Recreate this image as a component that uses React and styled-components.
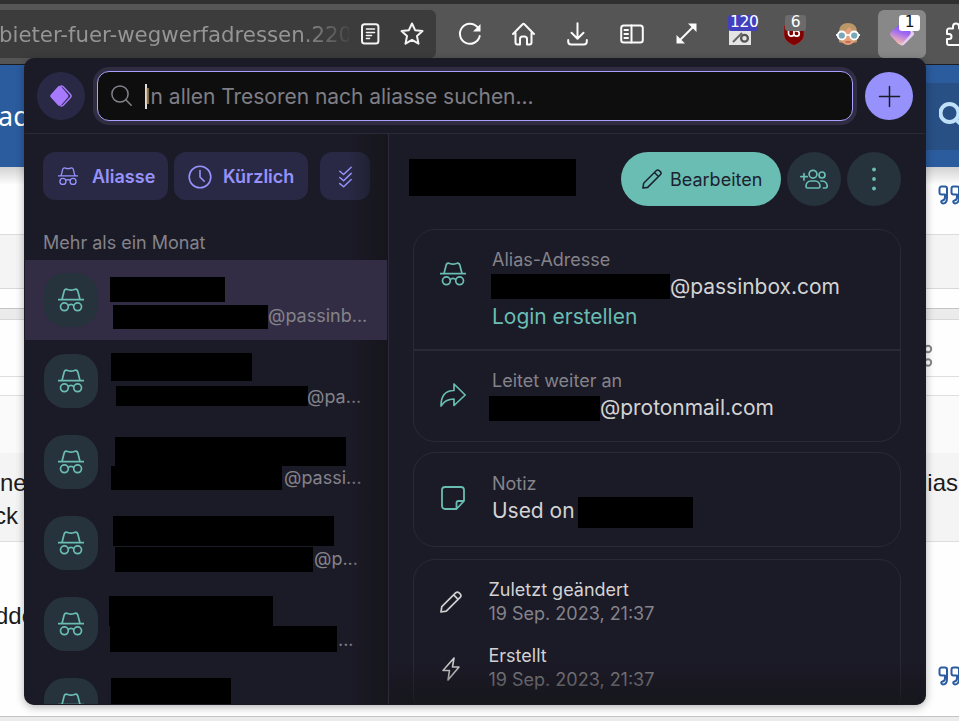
import React from 'react';
import styled, { createGlobalStyle } from 'styled-components';

const Global = createGlobalStyle`
  * { box-sizing: border-box; }
  html, body { margin: 0; padding: 0; overflow: hidden; }
  body { font-family: Inter, "Liberation Sans", sans-serif; }
  svg { display: block; flex: none; }
`;

const Screen = styled.div`
  position: relative;
  width: 959px;
  height: 721px;
  overflow: hidden;
  display: flex;
  flex-direction: column;
  background: #fefefe;
`;

/* Browser toolbar */
const Toolbar = styled.div`
  height: 65px;
  flex: none;
  display: flex;
  align-items: flex-start;
  padding-top: 6px;
  border-top: 4px solid #303030;
  border-bottom: 1px solid #1d1d1f;
  background: #555555;
`;
const UrlBar = styled.div`
  width: 436px;
  height: 48px;
  flex: none;
  margin-right: 7px;
  display: flex;
  align-items: center;
  background: #3c3c3c;
  border-radius: 0 6px 6px 0;
`;
const Url = styled.div`
  width: 349px;
  margin-right: 12px;
  padding-top: 2px;
  white-space: nowrap;
  font: 21.33px/30px "DejaVu Sans", sans-serif;
  letter-spacing: -0.02px;
  text-indent: -1px;
  color: #959595;
  mask-image: linear-gradient(90deg, #000 300px, transparent 355px);
`;
const Star = styled.div`
  margin-left: 20px;
`;
const ToolSlot = styled.div`
  position: relative;
  width: ${(p) => (p.$active ? 48 : 54)}px;
  margin: 0 ${(p) => (p.$active ? 3 : 0)}px;
  height: 48px;
  flex: none;
  display: flex;
  align-items: center;
  justify-content: center;
  border-radius: 6px;
  background: ${(p) => (p.$active ? '#888888' : 'transparent')};
`;
const Badge = styled.span`
  position: absolute;
  top: 5px;
  left: ${(p) => p.$left}px;
  width: ${(p) => p.$width}px;
  height: 16px;
  border-radius: 3px;
  text-align: center;
  padding-left: ${(p) => p.$pad || 0}px;
  font: 15.5px/14px "DejaVu Sans", sans-serif;
  letter-spacing: -0.4px;
  color: ${(p) => p.$color || '#ffffff'};
  background: ${(p) => p.$bg};
`;

/* Web page behind the popup */
const Band = styled.div`
  height: ${(p) => p.$h}px;
  flex: none;
  display: flex;
  justify-content: space-between;
  overflow: hidden;
  background: ${(p) => p.$bg || '#fefefe'};
  border-bottom: ${(p) => (p.$line ? `1px solid ${p.$line}` : 'none')};
`;
const BandLeft = styled.div`
  width: 26px;
  padding-top: ${(p) => p.$top || 0}px;
  text-indent: ${(p) => p.$indent || 0}px;
  white-space: nowrap;
  font: ${(p) => (p.$title ? '27px/32px "Noto Sans"' : '24px/33px "Liberation Sans"')}, sans-serif;
  color: ${(p) => (p.$title ? '#ffffff' : '#1b1b1b')};
`;
const BandRight = styled(BandLeft)`
  width: ${(p) => p.$w || 36}px;
`;
const PageLine = styled.div`
  text-indent: ${(p) => p.$indent}px;
`;
const SearchPatch = styled.div`
  width: 35px;
  height: 67px;
  margin-top: 18px;
  padding: 19px 0 0 15px;
  background: #285085;
`;
const HeaderShade = styled(Band)`
  background: linear-gradient(#d2d2d2, #fefefe 18px);
`;

/* Popup */
const Popup = styled.div`
  position: absolute;
  left: 24px;
  top: 58px;
  width: 902px;
  height: 647px;
  overflow: hidden;
  border: 1px solid #1d1b26;
  border-top-width: 0;
  border-radius: 10px;
  background: #1b1a27;
  box-shadow: 0 2px 8px rgba(0, 0, 0, 0.3);
  display: flex;
  flex-direction: column;
`;
const PopupHeader = styled.div`
  height: 76px;
  flex: none;
  display: flex;
  align-items: center;
  padding: 0 12px 0 12px;
  border-bottom: 1px solid #2a2936;
`;
const RoundButton = styled.div`
  width: ${(p) => p.$size}px;
  height: ${(p) => p.$size}px;
  flex: none;
  display: flex;
  align-items: center;
  justify-content: center;
  border-radius: 50%;
  background: ${(p) => p.$bg};
`;
const SearchField = styled.div`
  width: 756px;
  height: 50px;
  margin: 0 12px;
  display: flex;
  align-items: center;
  padding-left: 13px;
  border: 1px solid #a8a0ff;
  border-radius: 12px;
  background: #0e0e0e;
  box-shadow: 0 0 0 4px #302c42;
`;
const Caret = styled.div`
  width: 2px;
  height: 25px;
  margin: 1px -2px 0 13px;
  background: #dddddd;
`;
const Placeholder = styled.div`
  padding-top: 2px;
  font-size: 21px;
  line-height: 30px;
  letter-spacing: -0.03px;
  color: #7f7e86;
`;
const Columns = styled.div`
  flex: 1;
  min-height: 0;
  display: flex;
`;
const ListPane = styled.div`
  position: relative;
  width: 364px;
  flex: none;
  overflow: hidden;
  border-right: 1px solid #2c2a38;
`;
const PaneShade = styled.div`
  position: absolute;
  top: 0;
  right: 0;
  bottom: 0;
  width: 40px;
  pointer-events: none;
  background: linear-gradient(90deg, rgba(20, 19, 25, 0), rgba(20, 20, 22, 0.7));
`;
const BottomShade = styled.div`
  position: absolute;
  left: 364px;
  right: 0;
  bottom: 0;
  height: 44px;
  pointer-events: none;
  background: linear-gradient(rgba(20, 19, 25, 0), rgba(20, 20, 22, 0.6));
`;
const Filters = styled.div`
  display: flex;
  padding: 18px 0 0 18px;
`;
const Filter = styled.div`
  width: ${(p) => p.$w}px;
  height: 48px;
  margin-right: ${(p) => p.$gap || 0}px;
  padding: 1px 0 0 ${(p) => p.$pad}px;
  display: flex;
  align-items: center;
  gap: ${(p) => p.$space || 11}px;
  border-radius: 12px;
  background: #292946;
  color: #9792fb;
  font-size: 18px;
  font-weight: 600;
`;
const GroupLabel = styled.div`
  height: 60px;
  padding: 31px 0 0 18px;
  font-size: 18px;
  line-height: 24px;
  color: #84838a;
`;
const AliasRow = styled.div`
  position: relative;
  z-index: ${(p) => (p.$selected ? 1 : 'auto')};
  height: ${(p) => (p.$selected ? 80 : 81)}px;
  margin-right: ${(p) => (p.$selected ? 1 : 0)}px;
  padding: ${(p) => (p.$selected ? 13 : 14)}px 0 0 19px;
  display: flex;
  background: ${(p) => (p.$selected ? '#322d44' : 'transparent')};
`;
const AliasTile = styled.div`
  width: 54px;
  height: 54px;
  flex: none;
  display: flex;
  align-items: center;
  justify-content: center;
  border-radius: 21px;
  background: #26323c;
  color: #6abdb2;
`;
const AliasText = styled.div`
  padding-left: 11px;
  margin-top: ${(p) => p.$top}px;
`;
const AliasLine = styled.div`
  height: ${(p) => p.$h}px;
  margin-left: ${(p) => p.$x}px;
  margin-bottom: ${(p) => p.$gap || 0}px;
  display: flex;
  align-items: flex-start;
`;
const Redacted = styled.div`
  width: ${(p) => p.$w}px;
  height: ${(p) => p.$h}px;
  flex: none;
  background: #000000;
`;
const Domain = styled.div`
  margin-left: ${(p) => p.$dx || 0}px;
  margin-top: ${(p) => p.$dy || 0}px;
  font-size: 18px;
  line-height: 22px;
  color: #84838a;
`;

const DetailPane = styled.div`
  flex: 1;
  min-width: 0;
  padding: 18px 24px 0 20px;
  overflow: hidden;
`;
const DetailHead = styled.div`
  display: flex;
  height: 77px;
`;
const TitleSlot = styled.div`
  width: 212px;
  padding-top: 7px;
`;
const EditButton = styled.div`
  width: 160px;
  height: 54px;
  padding-left: 21px;
  display: flex;
  align-items: center;
  gap: 8px;
  border-radius: 27px;
  background: #6abdb2;
  color: #1b2230;
  font-size: 18px;
`;
const HeadAction = styled(RoundButton)`
  margin-left: 6px;
  color: #6abdb2;
`;
const Card = styled.div`
  width: 488px;
  height: ${(p) => p.$h}px;
  margin: 0 0 ${(p) => p.$gap || 0}px 4px;
  border: 1px solid #2a2936;
  border-radius: 22px;
`;
const Field = styled.div`
  height: ${(p) => p.$h}px;
  display: flex;
  padding: ${(p) => p.$top}px 0 0 26px;
  border-bottom: ${(p) => (p.$divided ? '2px solid #2a2936' : 'none')};
`;
const FieldIcon = styled.div`
  width: ${(p) => p.$w || 52}px;
  padding-top: ${(p) => p.$top}px;
  color: ${(p) => (p.$plain ? '#cfcfd0' : '#6abdb2')};
`;
const FieldLabel = styled.div`
  font-size: 18px;
  line-height: 24px;
  color: ${(p) => (p.$bright ? '#d3d3d4' : '#84838a')};
`;
const FieldValue = styled.div`
  display: flex;
  height: 30px;
  margin-left: ${(p) => p.$x || 0}px;
  align-items: center;
  white-space: nowrap;
  font-size: 21px;
  line-height: 30px;
  letter-spacing: -0.03px;
  gap: ${(p) => p.$gap || 0}px;
  color: ${(p) => (p.$link ? '#6abdb2' : '#d3d3d4')};
`;
const NoteRedaction = styled(Redacted)`
  margin-top: 3px;
`;
const RaisedRedaction = styled(Redacted)`
  margin-top: -2px;
`;

const line = (w = 2) => ({
  fill: 'none', stroke: 'currentColor', strokeWidth: w, strokeLinecap: 'round', strokeLinejoin: 'round',
});

const AliasIcon = ({ w = 26, sw = 1.7 }) => (
  <svg width={w} height={(w * 24) / 26} viewBox="0 0 26 24" {...line(sw)} strokeLinecap="butt">
    <path d="M0 11.6h26M4 11.5 6.1 3.2C6.7 1.2 8 .9 9.6 1.5c2.4.9 4.4.9 6.8 0 1.6-.6 2.9-.3 3.5 1.700L22 11.500" />
    <circle cx="6.400" cy="18.800" r="3.900" /><circle cx="19.600" cy="18.800" r="3.900" />
    <path d="M10.200 17.800c1.200-1.900 4.400-1.900 5.600 0" />
  </svg>
);
const PencilIcon = ({ w = 22 }) => (
  <svg width={w} height={w} viewBox="0 0 22 22" {...line(1.7)}>
    <path d="M1 21 1.800 15.700 15.600 1.900a2.500 2.500 0 0 1 3.500 0l1 1a2.500 2.500 0 0 1 0 3.500L6.300 20.200ZM13.700 3.900l4.400 4.400" />
  </svg>
);
const QuoteIcon = () => (
  <svg width="26" height="20" viewBox="0 0 26 20" {...line(2)} color="#2b5ca0">
    <path d="M8 9.500H4.500a2 2 0 0 1-2-2v-4a2 2 0 0 1 2-2H8a2 2 0 0 1 2 2v9c0 3.500-1.500 6-4 6-2 0-2.500-2.500-.5-3C7.500 15 8 14 8 12ZM20 9.500h-3.500a2 2 0 0 1-2-2v-4a2 2 0 0 1 2-2H20a2 2 0 0 1 2 2v9c0 3.500-1.500 6-4 6-2 0-2.500-2.500-.5-3 2-.5 2.500-1.500 2.500-3.500Z" />
  </svg>
);

const ROWS = [
  { top: 4, a: [-1, 25, 115], gap: 3, b: [2, 24, 155], text: '@passinb...', dx: 0 },
  { top: -1, a: [0, 28, 141], gap: 5, b: [5, 20, 192], text: '@pa...', dx: -1 },
  { top: 2, a: [4, 29, 231], gap: 0, b: [0, 24, 171], text: '@passi...', dx: 2, dy: 1 },
  { top: 0, a: [2, 30, 221], gap: 1, b: [4, 25, 198], text: '@p...', dx: 1, dy: 1 },
  { top: -1, a: [-2, 30, 164], gap: 0, b: [-1, 26, 227], text: '...', dx: 1, dy: 3 },
  { top: 0, a: [0, 28, 120] },
];

const BrowserIcons = () => (
  <>
    <ToolSlot><svg width="24" height="24" viewBox="0 0 24 24" {...line(2)} color="#fbfbfb"><path d="M21.700 14A10 10 0 1 1 19.500 5.200" /><path d="M22.500 2v7.500H15Z" fill="currentColor" stroke="none" /></svg></ToolSlot>
    <ToolSlot><svg width="24" height="24" viewBox="0 0 24 24" {...line(2)} color="#fbfbfb"><path d="M1 12 10.600 2.200a1.200 1.200 0 0 1 1.800 0L22 12M3.500 11v9.500a2 2 0 0 0 2 2H8V17a2.500 2.500 0 0 1 2.500-2.500h2A2.500 2.500 0 0 1 15 17v5.500h2.500a2 2 0 0 0 2-2V11" /></svg></ToolSlot>
    <ToolSlot><svg width="22" height="24" viewBox="0 0 22 24" {...line(2)} color="#fbfbfb"><path d="M10.500 1.300v15M4.500 10.800l6 6 6-6M1.200 18v1.500a3 3 0 0 0 3 3h12.600a3 3 0 0 0 3-3V18" /></svg></ToolSlot>
    <ToolSlot><svg width="24" height="20" viewBox="0 0 24 20" {...line(2)} color="#fbfbfb"><rect x="1.200" y="1.500" width="21.600" height="17" rx="2.500" /><path d="M11.500 1.500v17M4.500 6h3.500M4.500 10h3.500M4.500 14h3.500" /></svg></ToolSlot>
    <ToolSlot><svg width="22" height="22" viewBox="0 0 22 22" color="#fbfbfb"><path d="M4 18 18 4" {...line(2)} /><path d="M21.500.5V9L13 .5ZM1.500 20.500V12l8.500 8.500Z" fill="currentColor" /></svg></ToolSlot>
    <ToolSlot>
      <svg width="24" height="24" viewBox="0 0 24 24"><rect x="1" y="1" width="22" height="22" fill="#e4e4e4" /><path d="m5 20 9-9" stroke="#666" strokeWidth="2" /><circle cx="16.500" cy="16.300" r="3.400" fill="none" stroke="#555" strokeWidth="2.300" /></svg>
      <Badge $left={15} $width={30} $pad={2} $bg="#4340bd">120</Badge>
    </ToolSlot>
    <ToolSlot>
      <svg width="22" height="24" viewBox="0 0 22 24"><path d="M11 .5C8 2.500 5 3.200 1 3.500v9c0 5 4 8.500 10 11 6-2.500 10-6 10-11v-9C17 3.200 14 2.500 11 .5Z" fill="#800000" stroke="#9a4b4b" strokeWidth=".6" /><path d="M5.500 7.500v4a2.700 2.700 0 0 0 5.400 0v-4M10.900 11.500a2.700 2.700 0 1 0 2.700-2.700h-1" {...line(1.700)} color="#fff" /></svg>
      <Badge $left={18} $width={21} $bg="#6b6b6b">6</Badge>
    </ToolSlot>
    <ToolSlot><svg width="24" height="24" viewBox="0 0 24 24"><path d="M3 20V10C3 4 7 1 12 1s9 3 9 9v10c-2 1.500-16 1.500-18 0Z" fill="#b99768" /><path d="M5 10c5-1 6-3 8-5 2 2 4 4 6 5v6c0 4-3 7-7 7s-7-3-7-7Z" fill="#e3a07a" /><path d="M9.500 20h5" stroke="#b85e4e" strokeWidth="1.500" /><path d="M0 13h24" stroke="#eee" strokeWidth="2" /><circle cx="5.800" cy="13.500" r="4" fill="#78a7b7" stroke="#fff" strokeWidth="1.800" /><circle cx="18.200" cy="13.500" r="4" fill="#78a7b7" stroke="#fff" strokeWidth="1.800" /></svg></ToolSlot>
    <ToolSlot $active>
      <svg width="26" height="24" viewBox="0 0 26 24"><defs><linearGradient id="passFill" x1=".7" y1="0" x2=".35" y2="1"><stop offset="0" stopColor="#6d4aff" /><stop offset=".45" stopColor="#a36cf0" /><stop offset="1" stopColor="#ffc3a8" /></linearGradient></defs><path d="M13 1.500 16 .8l8.300 9.300a2.500 2.500 0 0 1 0 3.500L15 22.800c-1.500 1-3 .8-4-.2Z" fill="#e2cdf2" /><path d="M10.500 2.500a3 3 0 0 1 4.200 0l6 6.200a3 3 0 0 1 0 4.200l-7.500 8.500a3 3 0 0 1-4.200 0l-7.200-7.500a3 3 0 0 1 0-4Z" fill="url(#passFill)" /></svg>
      <Badge $left={21} $width={21} $bg="#ffffff" $color="#15141a">1</Badge>
    </ToolSlot>
    <ToolSlot><svg width="24" height="24" viewBox="0 0 24 24" {...line(2)} color="#fbfbfb"><path d="M6.500 23H5a2 2 0 0 1-2-2v-4h2a2.500 2.500 0 0 0 0-5H3V8.500a2 2 0 0 1 2-2h4V4.500a3 3 0 0 1 6 0v2h4a2 2 0 0 1 2 2V21a2 2 0 0 1-2 2Z" /></svg></ToolSlot>
  </>
);

export default function App() {
  return (
    <Screen>
      <Global />
      <Toolbar>
        <UrlBar>
          <Url>bieter-fuer-wegwerfadressen.220</Url>
          <svg width="19" height="22" viewBox="0 0 19 22" {...line(2)} color="#f3f3f3"><rect x="1" y="1.200" width="16.400" height="19.400" rx="2.500" /><path d="M5.500 6h8M5.500 9.500h8M5.500 12.500h5M5.500 15.500h3" strokeWidth="1.600" /></svg>
          <Star><svg width="24" height="24" viewBox="0 0 24 24" {...line(2)} color="#f3f3f3"><path d="m12 1.500 3.100 6.700 7.400.9-5.500 5 1.500 7.600-6.500-3.800-6.500 3.800L7 14.100l-5.500-5 7.400-.9Z" /></svg></Star>
        </UrlBar>
        <BrowserIcons />
      </Toolbar>

      <Band $h={102} $bg="#2b5c9e">
        <BandLeft $title $top={35} $indent={-2}>ad</BandLeft>
        <SearchPatch><svg width="28" height="28" viewBox="0 0 28 28" fill="none" stroke="#bfe0f7" strokeWidth="4"><circle cx="10.500" cy="11" r="9" /><path d="m17 17.500 7 7" /></svg></SearchPatch>
      </Band>
      <HeaderShade $h={68} $line="#dcdcdc"><BandLeft /><BandRight $w={22} $top={18}><QuoteIcon /></BandRight></HeaderShade>
      <Band $h={54} $bg="#f4f4f4" $line="#d8d8d8" />
      <Band $h={20} $line="#c4c4c4" />
      <Band $h={11} $bg="#ebebeb" $line="#d8d8d8" />
      <Band $h={57} $line="#dedede"><BandLeft /><BandRight $w={36} $top={24}><svg width="12" height="24" viewBox="0 0 12 24" fill="none" stroke="#858585" strokeWidth="2"><circle cx="5" cy="5" r="3.200" /><circle cx="5" cy="18.500" r="3.200" /></svg></BandRight></Band>
      <Band $h={19} $line="#dedede" />
      <Band $h={57} $bg="#fafafa" />
      <Band $h={89} $bg="#f4f4f4" $line="#dedede">
        <BandLeft $top={13}><PageLine $indent={0}>ne</PageLine><PageLine $indent={-6}>ck</PageLine></BandLeft>
        <BandRight $w={37} $top={13}>lias</BandRight>
      </Band>
      <Band $h={100}><BandLeft $top={57} $indent={-5}>dde</BandLeft></Band>
      <Band $h={75} $line="#c4c4c4"><BandLeft /><BandRight $w={22} $top={24}><QuoteIcon /></BandRight></Band>
      <Band $h={4} $bg="#ebebeb" />

      <Popup>
        <PopupHeader>
          <RoundButton $size={48} $bg="#292946">
            <svg width="22" height="22" viewBox="0 0 22 22"><path d="M8 1.600a2.200 2.200 0 0 1 3.100 0l6.700 7.800a2.200 2.200 0 0 1 0 3l-6.700 7.900a2.200 2.200 0 0 1-3.100 0L.9 12.500a2.200 2.200 0 0 1 0-3Z" fill="#a779ff" /><path d="M11 .9c1 0 1.600.3 2.200.9l7.200 7.600c.8.900.8 2.100 0 3l-7.200 7.900c-.6.600-1.200.8-2.200.8" {...line(1.500)} color="#a779ff" /></svg>
          </RoundButton>
          <SearchField>
            <svg width="21" height="21" viewBox="0 0 21 21" {...line(1.500)} color="#84838a"><circle cx="9" cy="9" r="8.100" /><path d="m14.800 14.800 5.400 5.400" /></svg>
            <Caret />
            <Placeholder>In allen Tresoren nach aliasse suchen...</Placeholder>
          </SearchField>
          <RoundButton $size={48} $bg="#9792fb">
            <svg width="24" height="24" viewBox="0 0 24 24" {...line(1.500)} color="#1b1a27"><path d="M12.500 2.500v20M2.500 12.500h20" /></svg>
          </RoundButton>
        </PopupHeader>

        <Columns>
          <ListPane>
            <Filters>
              <Filter $w={125} $gap={6} $pad={15} $space={14}><AliasIcon w={20} sw={1.700} />Aliasse</Filter>
              <Filter $w={134} $gap={12} $pad={14} $space={11}>
                <svg width="24" height="24" viewBox="0 0 24 24" {...line(1.600)}><circle cx="12" cy="12" r="10.800" /><path d="M12 5.500V12l4.200 4.200" /></svg>
                Kürzlich
              </Filter>
              <Filter $w={50} $pad={19}>
                <svg width="13" height="22" viewBox="0 0 13 22" {...line(1.500)}><path d="m.8 5.300 3.800 3.200 7.600-7.300M.8 11.500l3.800 3.200 7.600-7.300M.8 17.600l3.800 3.200 7.600-7.300" /></svg>
              </Filter>
            </Filters>
            <GroupLabel>Mehr als ein Monat</GroupLabel>
            {ROWS.map((r, i) => (
              <AliasRow key={i} $selected={i === 0}>
                <AliasTile><AliasIcon /></AliasTile>
                <AliasText $top={r.top}>
                  <AliasLine $x={r.a[0] + 2} $h={r.a[1]} $gap={r.gap}><Redacted $w={r.a[2]} $h={r.a[1]} /></AliasLine>
                  {r.b && (
                    <AliasLine $x={r.b[0] + 2} $h={r.b[1]}>
                      <Redacted $w={r.b[2]} $h={r.b[1]} />
                      <Domain $dx={r.dx} $dy={r.dy}>{r.text}</Domain>
                    </AliasLine>
                  )}
                </AliasText>
              </AliasRow>
            ))}
            <PaneShade />
          </ListPane>

          <DetailPane>
            <DetailHead>
              <TitleSlot><Redacted $w={167} $h={37} /></TitleSlot>
              <EditButton><PencilIcon w={20} />Bearbeiten</EditButton>
              <HeadAction $size={54} $bg="#26323c">
                <svg width="28" height="20" viewBox="0 0 28 20" {...line(1.700)}><circle cx="13" cy="5.200" r="3.900" /><circle cx="22" cy="6" r="3" /><path d="M.8 7.700h6.400M4 4.500v6.400M11 12h4c3.500 0 5 3 5 5.500 0 1-.6 1.500-1.500 1.500H7.500C6.600 19 6 18.500 6 17.500 6 15 7.500 12 11 12ZM21 12h1c3.500 0 5.200 3 5.200 5.500 0 1-.7 1.500-1.600 1.500h-2.200" /></svg>
              </HeadAction>
              <HeadAction $size={54} $bg="#26323c">
                <svg width="6" height="24" viewBox="0 0 6 24" fill="currentColor"><circle cx="3" cy="2.500" r="1.900" /><circle cx="3" cy="12" r="1.900" /><circle cx="3" cy="21.500" r="1.900" /></svg>
              </HeadAction>
            </DetailHead>

            <Card $h={213} $gap={10}>
              <Field $h={121} $top={18} $divided>
                <FieldIcon $top={14}><AliasIcon /></FieldIcon>
                <div>
                  <FieldLabel>Alias-Adresse</FieldLabel>
                  <FieldValue $x={-1}><RaisedRedaction $w={179} $h={25} />@passinbox.com</FieldValue>
                  <FieldValue $link>Login erstellen</FieldValue>
                </div>
              </Field>
              <Field $h={90} $top={18}>
                <FieldIcon $top={14}><svg width="26" height="24" viewBox="0 0 26 24" {...line(1.700)}><path d="M14 1v6.500C5 7.500 1 13 1 23c3-5 7-7 13-7v6.500L25.200 12Z" /></svg></FieldIcon>
                <div>
                  <FieldLabel>Leitet weiter an</FieldLabel>
                  <FieldValue $x={-3}><Redacted $w={111} $h={25} />@protonmail.com</FieldValue>
                </div>
              </Field>
            </Card>

            <Card $h={95} $gap={12}>
              <Field $h={93} $top={19}>
                <FieldIcon $top={14}><svg width="26" height="24" viewBox="0 0 26 24" {...line(1.800)}><path d="M5 1h16a3 3 0 0 1 3 3v11l-7.500 8H5a3 3 0 0 1-3-3V4a3 3 0 0 1 3-3ZM16.500 23v-6a2 2 0 0 1 2-2H24" /></svg></FieldIcon>
                <div>
                  <FieldLabel>Notiz</FieldLabel>
                  <FieldValue $gap={3}>Used on <NoteRedaction $w={115} $h={31} /></FieldValue>
                </div>
              </Field>
            </Card>

            <Card $h={158}>
              <Field $h={66} $top={18}>
                <FieldIcon $plain $top={13} $w={48.5}><PencilIcon w={22} /></FieldIcon>
                <div>
                  <FieldLabel $bright>Zuletzt geändert</FieldLabel>
                  <FieldLabel>19 Sep. 2023, 21:37</FieldLabel>
                </div>
              </Field>
              <Field $h={66} $top={18}>
                <FieldIcon $plain $top={13} $w={48.5}><svg width="22" height="24" viewBox="0 0 22 24" {...line(1.600)}><path d="M14 1 3 13.500h6.500L8 23l11-13h-6.500Z" /></svg></FieldIcon>
                <div>
                  <FieldLabel $bright>Erstellt</FieldLabel>
                  <FieldLabel>19 Sep. 2023, 21:37</FieldLabel>
                </div>
              </Field>
            </Card>
          </DetailPane>
        </Columns>
        <BottomShade />
      </Popup>
    </Screen>
  );
}
